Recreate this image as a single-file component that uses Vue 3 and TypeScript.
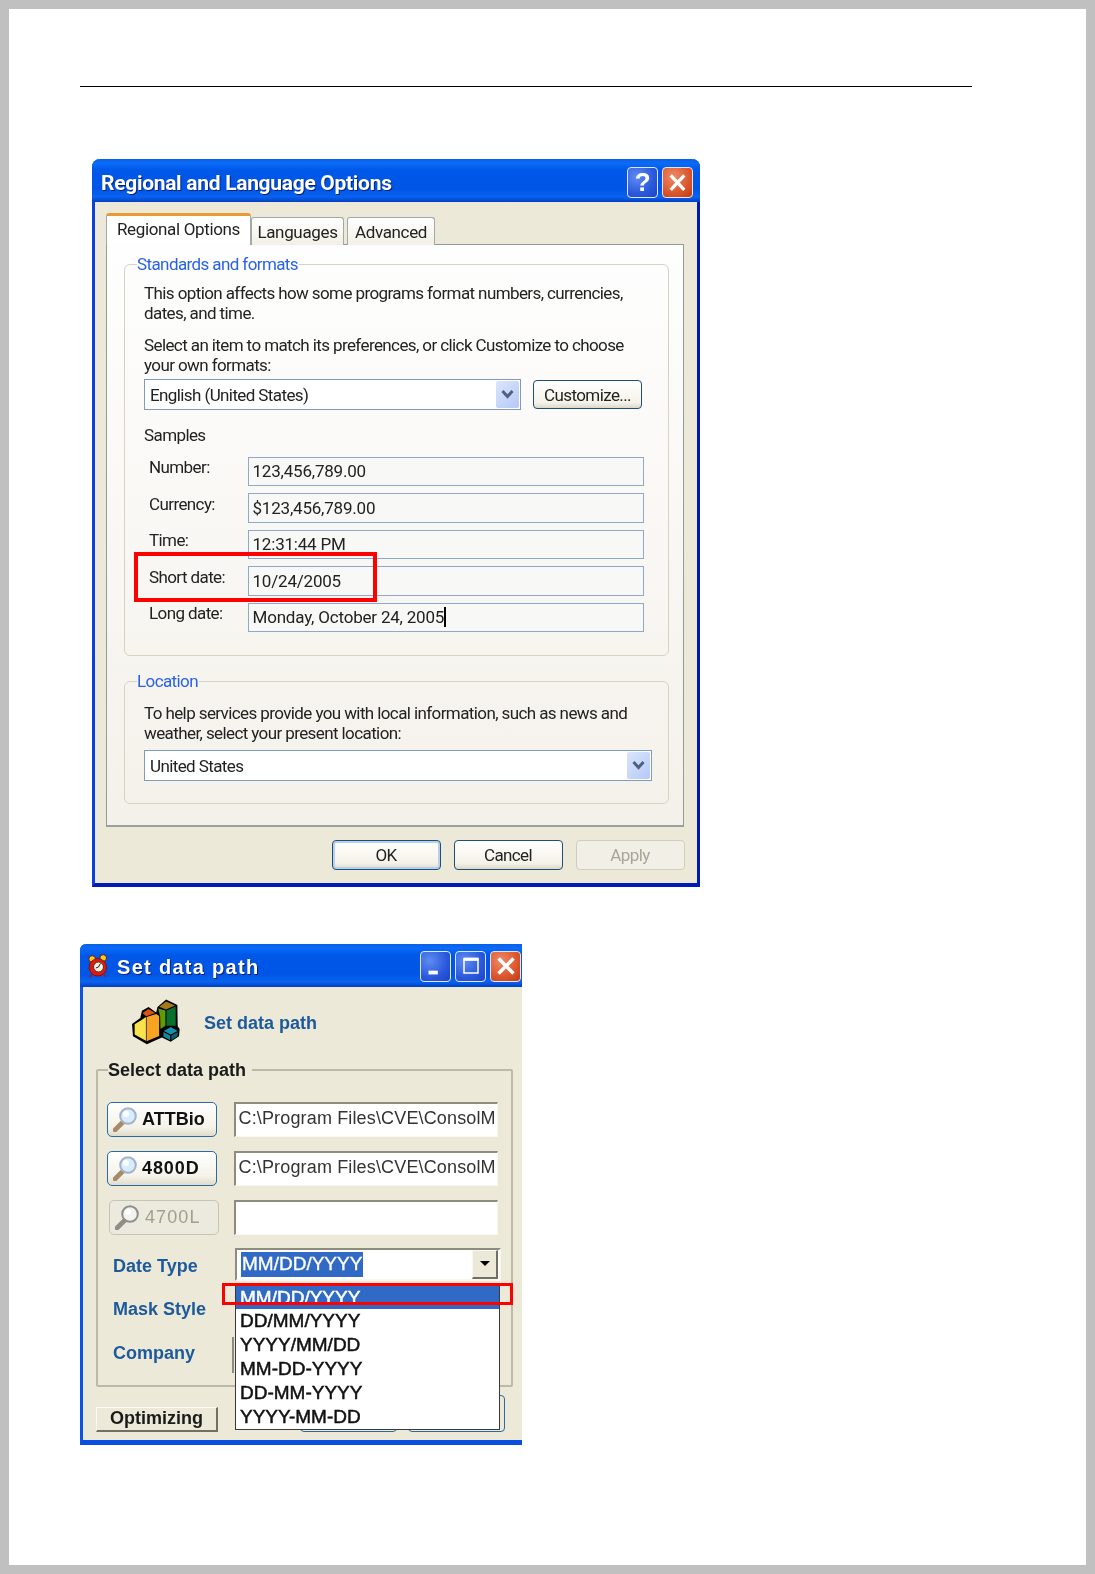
<script setup lang="ts">
interface Sample { label: string; value: string; caret?: boolean }
const samples: Sample[] = [
  { label: 'Number:', value: '123,456,789.00' },
  { label: 'Currency:', value: '$123,456,789.00' },
  { label: 'Time:', value: '12:31:44 PM' },
  { label: 'Short date:', value: '10/24/2005' },
  { label: 'Long date:', value: 'Monday, October 24, 2005', caret: true },
]
const paths = [
  { name: 'ATTBio', value: 'C:\\Program Files\\CVE\\ConsolM', off: false },
  { name: '4800D', value: 'C:\\Program Files\\CVE\\ConsolM', off: false },
  { name: '4700L', value: '', off: true },
]
const formats = ['MM/DD/YYYY', 'DD/MM/YYYY', 'YYYY/MM/DD', 'MM-DD-YYYY', 'DD-MM-YYYY', 'YYYY-MM-DD']
</script>

<template>
  <div class="page">
    <div class="sheet">
      <div class="rule"></div>

      <section class="xp one">
        <header class="bar bar-one">
          <span class="bar-title">Regional and Language Options</span>
          <span class="caps">
            <span class="cap blue help">?</span>
            <span class="cap red">
              <svg viewBox="0 0 30 30" width="30" height="30"><path d="M8 7 L22 22 M22 7 L8 22" stroke="#fff" stroke-width="3.4" fill="none" /></svg>
            </span>
          </span>
        </header>
        <div class="body-one">
          <div class="tabs">
            <span class="tab active">Regional Options</span>
            <span class="tab lang">Languages</span>
            <span class="tab adv">Advanced</span>
          </div>
          <div class="panel">
            <fieldset class="grp std">
              <legend>Standards and formats</legend>
              <p class="copy first">This option affects how some programs format numbers, currencies,<br />dates, and time.</p>
              <p class="copy second">Select an item to match its preferences, or click Customize to choose<br />your own formats:</p>
              <div class="fmt-row">
                <div class="xcombo short">
                  <span>English (United States)</span>
                  <span class="chev">
                    <svg viewBox="0 0 23 27" width="23" height="27"><path d="M6.5 10 L11.5 15.5 L16.5 10" stroke="#4d6185" stroke-width="3" fill="none" /></svg>
                  </span>
                </div>
                <span class="xbtn customize">Customize...</span>
              </div>
              <div class="samples-title">Samples</div>
              <div class="samples">
                <div v-for="s in samples" :key="s.label" class="sample">
                  <span class="sample-label">{{ s.label }}</span>
                  <span class="sample-value">{{ s.value }}<i v-if="s.caret" class="caret"></i></span>
                </div>
              </div>
            </fieldset>
            <fieldset class="grp loc">
              <legend>Location</legend>
              <p class="copy third">To help services provide you with local information, such as news and<br />weather, select your present location:</p>
              <div class="xcombo wide">
                <span>United States</span>
                <span class="chev">
                  <svg viewBox="0 0 23 27" width="23" height="27"><path d="M6.5 10 L11.5 15.5 L16.5 10" stroke="#4d6185" stroke-width="3" fill="none" /></svg>
                </span>
              </div>
            </fieldset>
          </div>
          <div class="actions">
            <span class="xbtn ok">OK</span>
            <span class="xbtn">Cancel</span>
            <span class="xbtn off">Apply</span>
          </div>
        </div>
        <div class="mark short-mark"></div>
      </section>

      <section class="xp two">
        <header class="bar bar-two">
          <svg class="clock" viewBox="20 40 65 72" width="22" height="24">
            <circle cx="35" cy="55" r="10" fill="#f2d21c" stroke="#7a1208" stroke-width="3" />
            <circle cx="68" cy="52" r="10" fill="#f2d21c" stroke="#7a1208" stroke-width="3" />
            <circle cx="52" cy="80" r="26" fill="#e01a10" stroke="#8a0f08" stroke-width="3" />
            <circle cx="54" cy="79" r="15" fill="#f4efe0" stroke="#5a2b10" stroke-width="3" />
            <path d="M54 79 L60 68 M54 79 L46 82" stroke="#222" stroke-width="3" />
            <path d="M34 102 L28 110 M70 102 L76 108" stroke="#b3150c" stroke-width="5" />
          </svg>
          <span class="bar-title title-two">Set data path</span>
          <span class="caps caps-two">
            <span class="cap blue">
              <svg viewBox="0 0 30 30" width="28" height="28"><rect x="7" y="20" width="10" height="4" fill="#fff" /></svg>
            </span>
            <span class="cap blue">
              <svg viewBox="0 0 30 30" width="28" height="28"><path d="M7.5 7.5 H22.5 V22.5 H7.5 Z" stroke="#fff" stroke-width="1.6" fill="none" /><rect x="7" y="6" width="16" height="3.5" fill="#fff" /></svg>
            </span>
            <span class="cap red">
              <svg viewBox="0 0 30 30" width="28" height="28"><path d="M7 7 L23 23 M23 7 L7 23" stroke="#fff" stroke-width="3.6" fill="none" /></svg>
            </span>
          </span>
        </header>
        <div class="body-two">
          <div class="head-two">
            <svg class="chart" viewBox="155 180 145 138" width="48" height="46">
              <path d="M155 255 L180 237 L185 215 L205 204 L228 220 L232 204 L258 181 L292 198 L293 262 L299 270 L297 292 L272 309 L245 296 L200 316 L158 292 Z" fill="#000" />
              <path d="M163 256 L183 244 L197 234 L197 306 L163 287 Z" fill="#f8e44a" />
              <path d="M199 234 L228 225 L237 231 L237 291 L199 307 Z" fill="#f6a421" />
              <path d="M187 222 L205 210 L225 222 L198 232 Z" fill="#d9541a" />
              <path d="M234 208 L256 214 L256 260 L241 270 L240 232 Z" fill="#5f9d08" />
              <path d="M259 214 L287 202 L287 260 L259 260 Z" fill="#0a6f2c" />
              <path d="M237 203 L258 187 L285 199 L258 211 Z" fill="#a8781c" />
              <path d="M251 276 L272 264 L293 276 L272 287 Z" fill="#1790b0" />
              <path d="M250 279 L270 290 L270 304 L250 293 Z" fill="#0d8a9e" />
              <path d="M274 290 L293 279 L293 291 L274 304 Z" fill="#086070" />
            </svg>
            <span class="head-text">Set data path</span>
          </div>
          <fieldset class="grp2">
            <legend>Select data path</legend>
            <div v-for="(p, i) in paths" :key="p.name" class="path-row" :class="'r' + i">
              <span class="lens-btn" :class="{ dim: p.off }">
                <svg viewBox="0 0 24 25" width="24" height="25">
                  <path d="M11 14 L2 23" :stroke="p.off ? '#8f8f88' : '#a88a68'" stroke-width="4.6" stroke-linecap="round" />
                  <circle cx="15" cy="9" r="7.8" :fill="p.off ? '#f2f2ee' : '#d8ecff'" :stroke="p.off ? '#8f8f88' : '#a3b2c4'" stroke-width="2" />
                  <circle cx="13" cy="7" r="3" fill="#fff" />
                </svg>
                <b>{{ p.name }}</b>
              </span>
              <span class="sunken">{{ p.value }}</span>
            </div>
            <div class="form-row date-row">
              <span class="form-label">Date Type</span>
              <div class="date-combo">
                <span class="date-sel">MM/DD/YYYY</span>
                <span class="date-arrow"><i></i></span>
              </div>
            </div>
            <div class="form-row mask-row"><span class="form-label">Mask Style</span></div>
            <div class="form-row company-row">
              <span class="form-label">Company</span>
              <span class="sliver"></span>
            </div>
          </fieldset>
          <div class="foot-two">
            <span class="raised">Optimizing</span>
            <span class="under u1"></span>
            <span class="under u2"></span>
          </div>
        </div>
        <ul class="drop">
          <li v-for="(f, i) in formats" :key="f" :class="{ sel: i === 0 }">{{ f }}</li>
        </ul>
        <div class="mark row-mark"></div>
      </section>
    </div>
  </div>
</template>

<style>
html, body { margin: 0; background: #c0c0c0; }
</style>

<style scoped>
.page {
  width: 1095px;
  height: 1574px;
  box-sizing: border-box;
  padding: 9px;
  background: #c0c0c0;
  overflow: hidden;
}
.sheet {
  height: 1556px;
  background: #fff;
  overflow: hidden;
}
.rule {
  width: 892px;
  height: 1px;
  margin: 77px 0 0 71px;
  background: #000;
}
.xp {
  position: relative;
  box-sizing: border-box;
  font-family: "Roboto", "Liberation Sans", sans-serif;
  color: #222;
  filter: blur(0.45px);
}
.one {
  width: 608px;
  height: 728px;
  margin: 71.5px 0 0 83px;
  border-radius: 8px 8px 0 0;
  border-left: 3px solid #0a3fe0;
  border-right: 3px solid #0019b8;
  border-bottom: 4px solid #0019b8;
  background: #ece9d8;
  font-size: 17px;
  letter-spacing: -0.6px;
}
.two {
  width: 442px;
  height: 501px;
  margin: 57px 0 0 71px;
  border-radius: 6px 0 0 0;
  border-left: 3px solid #0a55e8;
  border-bottom: 5px solid #0a4fe0;
  background: #ece9d8;
  font-family: "Liberation Sans", sans-serif;
}
.bar {
  display: flex;
  align-items: center;
  box-sizing: border-box;
  height: 43px;
  background: linear-gradient(180deg, #0c5fe8 0%, #0a6cf8 10%, #0058e8 25%, #0055e6 70%, #0a62ee 88%, #003fc4 100%);
  color: #fff;
}
.bar-one {
  margin: 0 -3px;
  padding: 5px 7px 0 9px;
  border-radius: 8px 8px 0 0;
}
.bar-two {
  margin-left: -3px;
  padding: 2px 1px 0 7px;
  border-radius: 6px 0 0 0;
}
.bar-title {
  flex: 1;
  font: bold 21px "Roboto", "Liberation Sans", sans-serif;
  letter-spacing: -0.3px;
  text-shadow: 1px 1px #0a1f6d;
  white-space: nowrap;
}
.title-two {
  margin-left: 8px;
  padding-top: 2px;
  font: bold 20px "Liberation Sans", sans-serif;
  letter-spacing: 1.3px;
}
.clock { flex: none; }
.caps { display: flex; gap: 4px; }
.caps-two { gap: 4px; }
.cap {
  display: flex;
  align-items: center;
  justify-content: center;
  box-sizing: border-box;
  width: 31px;
  height: 31px;
  border: 1.5px solid #dfe8fb;
  border-radius: 4px;
  color: #fff;
}
.blue { background: radial-gradient(circle at 30% 30%, #5f8cf0, #2a58dc 60%, #1c44c4); }
.red { background: radial-gradient(circle at 35% 30%, #ee8a68, #dc5a30 55%, #c23a10); }
.help { font: bold 26px "Liberation Sans", sans-serif; }
.body-one { padding: 11.5px 13.5px 0 11px; }
.tabs {
  display: flex;
  align-items: flex-end;
  position: relative;
  z-index: 1;
  margin-bottom: -1px;
  letter-spacing: -0.35px;
  white-space: nowrap;
}
.tab {
  box-sizing: border-box;
  display: flex;
  align-items: center;
  justify-content: center;
  height: 28px;
  padding-top: 1px;
  border: 1px solid #a3a9a8;
  border-bottom: 0;
  border-radius: 3px 3px 0 0;
  background: linear-gradient(180deg, #fff, #f2f0e6);
}
.active {
  width: 145px;
  height: 32px;
  padding-bottom: 5px;
  border-top: 3px solid #ea9a34;
  background: #fff;
}
.lang { width: 93px; }
.adv { width: 88px; margin-left: 3px; }
.panel {
  box-sizing: border-box;
  height: 582.5px;
  padding: 0 13px 0 17px;
  border: 1px solid #919b9c;
  border-bottom: 2px solid #9aa0a0;
  background: linear-gradient(180deg, #fefefe, #f4f1ea);
}
.grp {
  box-sizing: border-box;
  width: 545px;
  min-width: 0;
  margin: 9px 0 0;
  padding: 0 19px;
  border: 1.5px solid #d6d3c2;
  border-radius: 6px;
}
.grp legend {
  margin-left: -7px;
  padding: 0 1px 0 0;
  height: 20px;
  line-height: 20px;
  color: #2a62e6;
}
.std { height: 402px; }
.loc { height: 133px; margin-top: 15px; }
.copy {
  margin: 0;
  line-height: 20px;
  white-space: nowrap;
}
.first { margin-top: 9px; }
.second { margin-top: 12px; }
.third { margin: 12px 0 7px; }
.fmt-row {
  display: flex;
  align-items: center;
  margin-top: 4px;
}
.xcombo {
  display: flex;
  align-items: center;
  justify-content: space-between;
  box-sizing: border-box;
  height: 31px;
  padding: 0 1.5px 0 5px;
  border: 1.5px solid #7f9db9;
  background: #fff;
}
.short { width: 377px; }
.wide { width: 508px; }
.chev {
  display: flex;
  width: 23px;
  height: 27px;
  border-radius: 2px;
  background: linear-gradient(135deg, #dbe5fb, #b5c9f7);
}
.xbtn {
  display: flex;
  align-items: center;
  justify-content: center;
  box-sizing: border-box;
  width: 109px;
  height: 30px;
  border: 1.5px solid #1f4f78;
  border-radius: 4px;
  background: linear-gradient(180deg, #fff, #f4f2e8 80%, #dcd8c8);
}
.customize { margin-left: 12px; height: 29px; }
.samples-title {
  margin-top: 15px;
  line-height: 20px;
}
.samples {
  display: grid;
  grid-auto-rows: 29.5px;
  gap: 7px;
  margin-top: 11.5px;
}
.sample {
  display: grid;
  grid-template-columns: 104px 396px;
}
.sample-label {
  padding: 1.5px 0 0 5px;
  line-height: 18px;
}
.sample-value {
  display: flex;
  align-items: center;
  box-sizing: border-box;
  padding-left: 3.5px;
  border: 1.5px solid #8fa9c9;
  background: #f8f8f7;
  white-space: nowrap;
  letter-spacing: -0.2px;
}
.caret {
  width: 1.5px;
  height: 20px;
  background: #000;
}
.actions {
  display: flex;
  justify-content: flex-end;
  gap: 13px;
  margin: 13px -1px 0 0;
}
.ok { box-shadow: inset 0 0 0 2px #b8cff0; }
.off {
  border-color: #d0cdbd;
  color: #a8a698;
  background: #f2f0e6;
}
.mark {
  position: absolute;
  box-sizing: border-box;
  pointer-events: none;
}
.short-mark {
  left: 38.5px;
  top: 393px;
  width: 243px;
  height: 50px;
  border: 4px solid #f00;
}
.row-mark {
  left: 139px;
  top: 339px;
  width: 291px;
  height: 22px;
  border: 3.5px solid #f00;
}
.body-two { padding: 12px 0 0 13px; }
.head-two {
  display: flex;
  align-items: center;
  height: 46px;
  padding-left: 36px;
}
.head-text {
  margin-left: 24px;
  padding-top: 3px;
  font-size: 18px;
  font-weight: bold;
  color: #1c5a9c;
}
.grp2 {
  box-sizing: border-box;
  width: 417px;
  min-width: 0;
  height: 328px;
  margin: 14px 0 0;
  padding: 21px 13px 0 9px;
  border: 2px solid #bcb9a8;
  border-radius: 2px;
}
.grp2 legend {
  margin-left: 1px;
  padding: 0 6px 0 0;
  height: 22px;
  line-height: 22px;
  font-size: 18px;
  font-weight: bold;
  color: #1a1a1a;
}
.path-row {
  display: flex;
  justify-content: space-between;
  height: 35px;
  margin-bottom: 14px;
}
.r2 { margin-bottom: 13px; }
.lens-btn {
  display: flex;
  align-items: center;
  gap: 5px;
  box-sizing: border-box;
  width: 110px;
  padding-left: 5px;
  border: 1.5px solid #2b6a9e;
  border-radius: 5px;
  background: linear-gradient(180deg, #fff, #f4f2e8 75%, #dedbcb);
  font-size: 18px;
  color: #111;
}
.r1 b { letter-spacing: 0.9px; }
.dim {
  margin-left: 2px;
  border-color: #c6c4b2;
  background: #ece9de;
  color: #a0a08c;
  gap: 6px;
}
.dim b {
  font-weight: normal;
  letter-spacing: 1.1px;
}
.sunken {
  box-sizing: border-box;
  width: 264px;
  padding: 4px 0 0 2.5px;
  white-space: nowrap;
  border-style: solid;
  border-width: 2.5px 1.5px 1.5px 2.5px;
  border-color: #8e8c7e #f8f8f2 #f8f8f2 #8e8c7e;
  background: #fff;
  font-size: 18px;
  letter-spacing: 0.15px;
  color: #333;
}
.form-row {
  display: flex;
  align-items: center;
  position: relative;
  height: 33px;
}
.mask-row { margin-top: 12px; }
.company-row { margin-top: 11px; }
.form-label {
  padding-left: 6px;
  font-size: 18px;
  font-weight: bold;
  color: #1c5a9c;
}
.date-row .form-label { padding-top: 4px; }
.date-combo {
  display: flex;
  align-items: center;
  justify-content: space-between;
  box-sizing: border-box;
  width: 266px;
  height: 33px;
  margin-left: auto;
  margin-right: -3px;
  padding: 1px 1px 1px 4px;
  border-style: solid;
  border-width: 2px;
  border-color: #8e8c7e #f8f8f2 #f8f8f2 #8e8c7e;
  background: #fff;
}
.date-sel {
  display: flex;
  align-items: center;
  height: 25px;
  padding: 0 1px;
  background: #316ac5;
  color: #fff;
  font-size: 19px;
  -webkit-text-stroke: 0.35px #fff;
}
.date-arrow {
  display: flex;
  align-items: center;
  justify-content: center;
  box-sizing: border-box;
  width: 26px;
  height: 29px;
  border-style: solid;
  border-width: 1.5px 2px 2px 1.5px;
  border-color: #f8f8f2 #716f64 #716f64 #f8f8f2;
  background: #ece9d8;
}
.date-arrow i {
  border-style: solid;
  border-width: 5px 5px 0;
  border-color: #000 transparent transparent;
}
.sliver {
  position: absolute;
  top: 0;
  left: 125px;
  width: 2px;
  height: 36px;
  background: #8e8c7e;
}
.foot-two {
  display: flex;
  align-items: flex-end;
  height: 37px;
  margin-top: 8px;
}
.raised {
  display: flex;
  align-items: center;
  justify-content: center;
  box-sizing: border-box;
  width: 122px;
  height: 25px;
  border-style: solid;
  border-width: 1.5px 2px 2px 1.5px;
  border-color: #fbfbf6 #716f64 #716f64 #fbfbf6;
  font-size: 18px;
  font-weight: bold;
  color: #1a1a1a;
}
.under {
  box-sizing: border-box;
  height: 37px;
  border: 1.5px solid #2b6a9e;
  border-radius: 4px;
}
.u1 { width: 97px; margin-left: 82px; }
.u2 { width: 97px; margin-left: 11px; }
.drop {
  position: absolute;
  left: 152px;
  top: 339px;
  box-sizing: border-box;
  width: 265px;
  height: 147px;
  margin: 0;
  padding: 1px 0 0;
  list-style: none;
  border: 1.5px solid #3a3a3a;
  background: #fff;
  font-size: 19px;
  color: #111;
  -webkit-text-stroke: 0.5px currentColor;
}
.drop li {
  height: 24px;
  padding-left: 4px;
  line-height: 24px;
}
.drop .sel {
  box-sizing: border-box;
  padding-top: 1px;
  background: #316ac5;
  color: #fff;
}
</style>
